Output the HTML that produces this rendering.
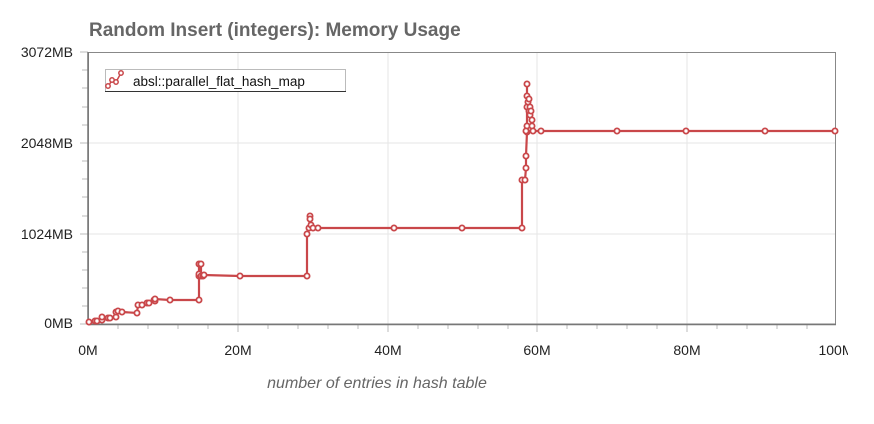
<!DOCTYPE html>
<html><head><meta charset="utf-8"><style>
html,body{margin:0;padding:0;background:#fff;width:874px;height:424px;overflow:hidden}
svg{display:block;font-family:"Liberation Sans",Arial,sans-serif}
</style></head><body>
<svg width="874" height="424" viewBox="0 0 874 424">
<defs><clipPath id="c"><rect x="0" y="0" width="848" height="424"/></clipPath></defs>
<text x="89" y="36" font-size="19" font-weight="bold" fill="#666">Random Insert (integers): Memory Usage</text>
<g stroke="#e6e6e6" stroke-width="1">
<line x1="238" y1="52" x2="238" y2="324"/><line x1="388" y1="52" x2="388" y2="324"/>
<line x1="537" y1="52" x2="537" y2="324"/><line x1="687" y1="52" x2="687" y2="324"/>
<line x1="88" y1="143" x2="836" y2="143"/><line x1="88" y1="234" x2="836" y2="234"/>
</g>
<g stroke="#bbb" stroke-width="1">
<line x1="80" y1="52" x2="88" y2="52"/><line x1="82" y1="70" x2="88" y2="70"/><line x1="82" y1="88" x2="88" y2="88"/><line x1="82" y1="107" x2="88" y2="107"/><line x1="82" y1="125" x2="88" y2="125"/>
<line x1="80" y1="143" x2="88" y2="143"/><line x1="82" y1="161" x2="88" y2="161"/><line x1="82" y1="179" x2="88" y2="179"/><line x1="82" y1="197" x2="88" y2="197"/><line x1="82" y1="216" x2="88" y2="216"/>
<line x1="80" y1="234" x2="88" y2="234"/><line x1="82" y1="252" x2="88" y2="252"/><line x1="82" y1="270" x2="88" y2="270"/><line x1="82" y1="288" x2="88" y2="288"/><line x1="82" y1="306" x2="88" y2="306"/>
<line x1="80" y1="324" x2="88" y2="324"/>
<line x1="118" y1="324" x2="118" y2="329"/><line x1="148" y1="324" x2="148" y2="329"/><line x1="178" y1="324" x2="178" y2="329"/><line x1="208" y1="324" x2="208" y2="329"/><line x1="238" y1="324" x2="238" y2="332"/>
<line x1="268" y1="324" x2="268" y2="329"/><line x1="298" y1="324" x2="298" y2="329"/><line x1="328" y1="324" x2="328" y2="329"/><line x1="358" y1="324" x2="358" y2="329"/><line x1="388" y1="324" x2="388" y2="332"/>
<line x1="418" y1="324" x2="418" y2="329"/><line x1="448" y1="324" x2="448" y2="329"/><line x1="478" y1="324" x2="478" y2="329"/><line x1="508" y1="324" x2="508" y2="329"/><line x1="537" y1="324" x2="537" y2="332"/>
<line x1="567" y1="324" x2="567" y2="329"/><line x1="597" y1="324" x2="597" y2="329"/><line x1="627" y1="324" x2="627" y2="329"/><line x1="657" y1="324" x2="657" y2="329"/><line x1="687" y1="324" x2="687" y2="332"/>
<line x1="717" y1="324" x2="717" y2="329"/><line x1="747" y1="324" x2="747" y2="329"/><line x1="777" y1="324" x2="777" y2="329"/><line x1="807" y1="324" x2="807" y2="329"/>
</g>
<rect x="88.5" y="52.5" width="747" height="271.5" fill="none" stroke="#888" stroke-width="1"/>
<line x1="88" y1="52" x2="88" y2="325" stroke="#777" stroke-width="1.5"/>
<line x1="88" y1="324.5" x2="836" y2="324.5" stroke="#777" stroke-width="1.5"/>
<g font-size="14" fill="#222" text-anchor="end">
<text x="73" y="57">3072MB</text><text x="73" y="148">2048MB</text><text x="73" y="239">1024MB</text><text x="73" y="328">0MB</text>
</g>
<g font-size="14" fill="#222" text-anchor="middle" clip-path="url(#c)">
<text x="88" y="355">0M</text><text x="238" y="355">20M</text><text x="388" y="355">40M</text><text x="537" y="355">60M</text><text x="687" y="355">80M</text><text x="836" y="355">100M</text>
</g>
<text x="377" y="388" font-size="16" font-style="italic" fill="#666" text-anchor="middle">number of entries in hash table</text>
<rect x="105.5" y="69.5" width="240" height="22" fill="#fff" stroke="#bbb"/>
<line x1="105" y1="91.5" x2="346" y2="91.5" stroke="#333"/>
<polyline points="108,87 112,80 116,82 121,73" fill="none" stroke="#c9474a" stroke-width="1.5"/>
<g fill="#fff" stroke="#c9474a" stroke-width="1.5"><circle cx="108" cy="86" r="2.2"/><circle cx="112" cy="80" r="2.2"/><circle cx="116" cy="82" r="2.2"/><circle cx="121" cy="73" r="2.2"/></g>
<text x="133" y="86" font-size="13.5" fill="#111">absl::parallel_flat_hash_map</text>
<polyline fill="none" stroke="#c9474a" stroke-width="2.2" points="89,322 95,321 97,321 102,320 102,317 108,318 110,318 116,317 116,312 118,311 122,312 137,313 138,305 142,305 147,303 149,303 154,300 155,301 155,299 170,300 199,300 199,276 199,274 199,264 201,264 201,276 203,276 204,275 240,276 307,276 307,234 309,228 310,216 310,219 311,225 313,228 318,228 394,228 462,228 522,228 522,180 525,180 526,168 526,156 527,132 527,126 527,96 527,84 527,107 528,102 529,111 530,115 532,120 532,126 533,131 541,131 617,131 686,131 765,131 835,131"/>
<g fill="#fff" stroke="#c9474a" stroke-width="1.8">
<circle cx="89" cy="322" r="2.6"/><circle cx="95" cy="321" r="2.6"/><circle cx="97" cy="321" r="2.6"/><circle cx="102" cy="320" r="2.6"/><circle cx="102" cy="317" r="2.6"/><circle cx="108" cy="318" r="2.6"/><circle cx="110" cy="318" r="2.6"/><circle cx="116" cy="317" r="2.6"/><circle cx="116" cy="312" r="2.6"/><circle cx="118" cy="311" r="2.6"/><circle cx="122" cy="312" r="2.6"/><circle cx="137" cy="313" r="2.6"/><circle cx="138" cy="305" r="2.6"/><circle cx="142" cy="305" r="2.6"/><circle cx="147" cy="303" r="2.6"/><circle cx="149" cy="303" r="2.6"/><circle cx="154" cy="300" r="2.6"/><circle cx="155" cy="301" r="2.6"/><circle cx="155" cy="299" r="2.6"/><circle cx="170" cy="300" r="2.6"/><circle cx="199" cy="300" r="2.6"/><circle cx="199" cy="276" r="2.6"/><circle cx="199" cy="274" r="2.6"/><circle cx="199" cy="264" r="2.6"/><circle cx="201" cy="264" r="2.6"/><circle cx="201" cy="276" r="2.6"/><circle cx="203" cy="276" r="2.6"/><circle cx="204" cy="275" r="2.6"/><circle cx="240" cy="276" r="2.6"/><circle cx="307" cy="276" r="2.6"/><circle cx="307" cy="234" r="2.6"/><circle cx="309" cy="228" r="2.6"/><circle cx="310" cy="216" r="2.6"/><circle cx="310" cy="219" r="2.6"/><circle cx="311" cy="225" r="2.6"/><circle cx="313" cy="228" r="2.6"/><circle cx="318" cy="228" r="2.6"/><circle cx="394" cy="228" r="2.6"/><circle cx="462" cy="228" r="2.6"/><circle cx="522" cy="228" r="2.6"/><circle cx="522" cy="180" r="2.6"/><circle cx="525" cy="180" r="2.6"/><circle cx="526" cy="168" r="2.6"/><circle cx="526" cy="156" r="2.6"/><circle cx="527" cy="132" r="2.6"/><circle cx="527" cy="126" r="2.6"/><circle cx="527" cy="96" r="2.6"/><circle cx="527" cy="84" r="2.6"/><circle cx="527" cy="107" r="2.6"/><circle cx="528" cy="102" r="2.6"/><circle cx="529" cy="111" r="2.6"/><circle cx="530" cy="115" r="2.6"/><circle cx="532" cy="120" r="2.6"/><circle cx="532" cy="126" r="2.6"/><circle cx="533" cy="131" r="2.6"/><circle cx="529" cy="99" r="2.6"/><circle cx="530" cy="107" r="2.6"/><circle cx="531" cy="111" r="2.6"/><circle cx="526" cy="131" r="2.6"/><circle cx="541" cy="131" r="2.6"/><circle cx="617" cy="131" r="2.6"/><circle cx="686" cy="131" r="2.6"/><circle cx="765" cy="131" r="2.6"/><circle cx="835" cy="131" r="2.6"/>
</g>
</svg>
</body></html>
